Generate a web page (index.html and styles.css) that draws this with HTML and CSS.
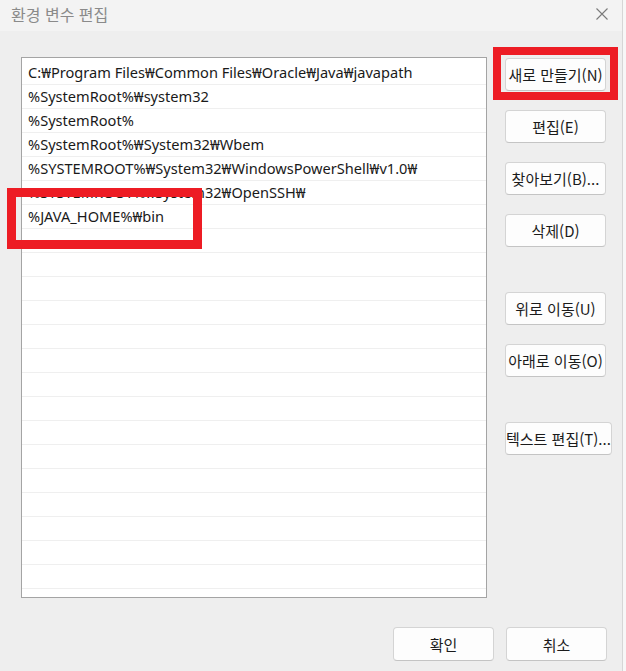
FILE: index.html
```html
<!DOCTYPE html>
<html lang="ko">
<head>
<meta charset="utf-8">
<title>환경 변수 편집</title>
<link rel="stylesheet" href="styles.css">
</head>
<body>
<div class="window">
  <div class="titlebar">
    <span class="title">환경 변수 편집</span>
    <svg class="close" width="12" height="12" viewBox="0 0 12 12"><path d="M0.5 0.5 L11.5 11.5 M11.5 0.5 L0.5 11.5" stroke="#7a7a7a" stroke-width="1.1" fill="none"/></svg>
  </div>
  <div class="content">
    <div class="list">
      <div class="row">C:₩Program Files₩Common Files₩Oracle₩Java₩javapath</div>
      <div class="row">%SystemRoot%₩system32</div>
      <div class="row">%SystemRoot%</div>
      <div class="row">%SystemRoot%₩System32₩Wbem</div>
      <div class="row">%SYSTEMROOT%₩System32₩WindowsPowerShell₩v1.0₩</div>
      <div class="row">%SYSTEMROOT%₩System32₩OpenSSH₩</div>
      <div class="row">%JAVA_HOME%₩bin</div>
      <div class="row"></div><div class="row"></div><div class="row"></div><div class="row"></div>
      <div class="row"></div><div class="row"></div><div class="row"></div><div class="row"></div>
      <div class="row"></div><div class="row"></div><div class="row"></div><div class="row"></div>
      <div class="row"></div><div class="row"></div><div class="row"></div><div class="row"></div>
    </div>
    <div class="side">
      <button class="btn">새로 만들기(N)</button>
      <button class="btn">편집(E)</button>
      <button class="btn">찾아보기(B)...</button>
      <button class="btn">삭제(D)</button>
      <button class="btn spaced">위로 이동(U)</button>
      <button class="btn">아래로 이동(O)</button>
      <button class="btn spaced">텍스트 편집(T)...</button>
    </div>
  </div>
  <div class="footer">
    <button class="btn">확인</button>
    <button class="btn">취소</button>
  </div>
  <div class="mark mark-new"></div>
  <div class="mark mark-java"></div>
</div>
</body>
</html>
```
FILE: styles.css
```css
html, body {
  margin: 0;
  padding: 0;
  background: #f7f7f7;
}
body {
  width: 626px;
  height: 671px;
  overflow: hidden;
  font-family: "Noto Sans", "Noto Sans CJK KR", sans-serif;
}
.window {
  position: relative;
  width: 622px;
  height: 671px;
  background: #eeeeee;
  border-right: 1px solid #d6d6d6;
  display: flex;
  flex-direction: column;
}
.titlebar {
  height: 31px;
  background: #f3f3f3;
  display: flex;
  align-items: center;
  justify-content: space-between;
  padding: 0 14px 4px 11px;
  box-sizing: border-box;
}
.title {
  font-family: "Noto Sans CJK KR", sans-serif;
  font-size: 16px;
  color: #8a8a8a;
}
.content {
  display: flex;
  padding-top: 26px;
}
.list {
  margin-left: 21px;
  width: 466px;
  height: 541px;
  box-sizing: border-box;
  border: 1px solid #a4a4a4;
  background: #ffffff;
  padding-top: 3px;
  overflow: hidden;
}
.row {
  height: 24px;
  box-sizing: border-box;
  border-bottom: 1px solid #efefef;
  padding-left: 6px;
  font-size: 14.6px;
  line-height: 23px;
  color: #1a1a1a;
  white-space: nowrap;
}
.side {
  display: flex;
  flex-direction: column;
  align-items: flex-start;
  gap: 19px;
  margin-left: 18px;
  padding-top: 1px;
}
.btn {
  min-width: 101px;
  height: 33px;
  padding: 0;
  box-sizing: border-box;
  background: #fdfdfd;
  border: 1px solid #d4d4d4;
  border-bottom-color: #c4c4c4;
  border-radius: 4px;
  font-family: "Noto Sans CJK KR", sans-serif;
  font-size: 15px;
  color: #1b1b1b;
  white-space: nowrap;
}
.spaced {
  margin-top: 26px;
}
.footer {
  display: flex;
  justify-content: flex-end;
  gap: 12px;
  padding: 29px 15px 0 0;
}
.footer .btn {
  height: 34px;
}
.mark {
  position: absolute;
  box-sizing: border-box;
  border: 8px solid #ed1c24;
}
.mark-new {
  left: 493px;
  top: 47px;
  width: 125px;
  height: 53px;
}
.mark-java {
  left: 7px;
  top: 188px;
  width: 195px;
  height: 61px;
  border-width: 9px;
}
```
